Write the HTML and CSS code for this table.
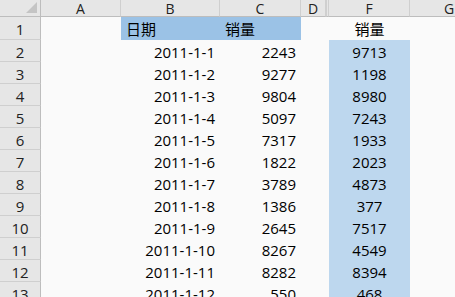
FILE: index.html
```html
<!DOCTYPE html>
<html>
<head>
<meta charset="utf-8">
<link rel="stylesheet" href="styles.css">
</head>
<body>
<div class="sheet">
  <div class="corner"><span class="tri"></span></div>
  <div class="ch">A</div>
  <div class="ch">B</div>
  <div class="ch">C</div>
  <div class="ch">D</div>
  <div class="ch hidden"></div>
  <div class="ch">F</div>
  <div class="ch last">G</div>

  <div class="rh">1</div><div class="c"></div><div class="c hdr l">日期</div><div class="c hdr l">销量</div><div class="c"></div><div class="c"></div><div class="c m">销量</div><div class="c"></div>
  <div class="rh">2</div><div class="c"></div><div class="c r">2011-1-1</div><div class="c r">2243</div><div class="c"></div><div class="c"></div><div class="c m fill">9713</div><div class="c"></div>
  <div class="rh">3</div><div class="c"></div><div class="c r">2011-1-2</div><div class="c r">9277</div><div class="c"></div><div class="c"></div><div class="c m fill">1198</div><div class="c"></div>
  <div class="rh">4</div><div class="c"></div><div class="c r">2011-1-3</div><div class="c r">9804</div><div class="c"></div><div class="c"></div><div class="c m fill">8980</div><div class="c"></div>
  <div class="rh">5</div><div class="c"></div><div class="c r">2011-1-4</div><div class="c r">5097</div><div class="c"></div><div class="c"></div><div class="c m fill">7243</div><div class="c"></div>
  <div class="rh">6</div><div class="c"></div><div class="c r">2011-1-5</div><div class="c r">7317</div><div class="c"></div><div class="c"></div><div class="c m fill">1933</div><div class="c"></div>
  <div class="rh">7</div><div class="c"></div><div class="c r">2011-1-6</div><div class="c r">1822</div><div class="c"></div><div class="c"></div><div class="c m fill">2023</div><div class="c"></div>
  <div class="rh">8</div><div class="c"></div><div class="c r">2011-1-7</div><div class="c r">3789</div><div class="c"></div><div class="c"></div><div class="c m fill">4873</div><div class="c"></div>
  <div class="rh">9</div><div class="c"></div><div class="c r">2011-1-8</div><div class="c r">1386</div><div class="c"></div><div class="c"></div><div class="c m fill">377</div><div class="c"></div>
  <div class="rh">10</div><div class="c"></div><div class="c r">2011-1-9</div><div class="c r">2645</div><div class="c"></div><div class="c"></div><div class="c m fill">7517</div><div class="c"></div>
  <div class="rh">11</div><div class="c"></div><div class="c r">2011-1-10</div><div class="c r">8267</div><div class="c"></div><div class="c"></div><div class="c m fill">4549</div><div class="c"></div>
  <div class="rh">12</div><div class="c"></div><div class="c r">2011-1-11</div><div class="c r">8282</div><div class="c"></div><div class="c"></div><div class="c m fill">8394</div><div class="c"></div>
  <div class="rh">13</div><div class="c"></div><div class="c r">2011-1-12</div><div class="c r">550</div><div class="c"></div><div class="c"></div><div class="c m fill">468</div><div class="c"></div>
</div>
</body>
</html>
```

FILE: styles.css
```css
html, body {
  margin: 0;
  padding: 0;
  background: #fafafa;
  overflow: hidden;
}

.sheet {
  display: grid;
  grid-template-columns: 41px 80px 99px 81px 25px 3px 81px 45px;
  grid-template-rows: 17px 23px repeat(12, 22px);
  font-family: "Open Sans", "Noto Sans CJK SC", sans-serif;
  font-size: 15px;
  color: #000;
  width: 455px;
}

.corner {
  background: #e6e6e6;
  border-right: 1px solid #bdbdbd;
  border-bottom: 1px solid #bdbdbd;
  box-sizing: border-box;
  position: relative;
}

.tri {
  position: absolute;
  right: 3px;
  bottom: 3px;
  width: 0;
  height: 0;
  border-left: 11px solid transparent;
  border-bottom: 11px solid #c4c4c4;
}

.ch {
  background: #e6e6e6;
  border-right: 1px solid #cfcfcf;
  border-bottom: 1px solid #bdbdbd;
  box-sizing: border-box;
  text-align: center;
  font-size: 14px;
  line-height: 17px;
  color: #222;
}

.ch.hidden {
  border-left: 1px solid #cfcfcf;
}

.ch.last {
  text-align: left;
  padding-left: 34px;
  border-right: none;
}

.rh {
  background: #e6e6e6;
  border-right: 1px solid #bdbdbd;
  border-bottom: 1px solid #cfcfcf;
  box-sizing: border-box;
  text-align: center;
  font-size: 15px;
  line-height: 24px;
  color: #222;
}

.c {
  box-sizing: border-box;
  white-space: nowrap;
  overflow: hidden;
  line-height: 24px;
  padding: 0 5px;
}

.c.r { text-align: right; }
.c.l { text-align: left; }
.c.m { text-align: center; }

.c.hdr {
  background: #9bc2e6;
}

.c.fill {
  background: #bdd7ee;
}
```
